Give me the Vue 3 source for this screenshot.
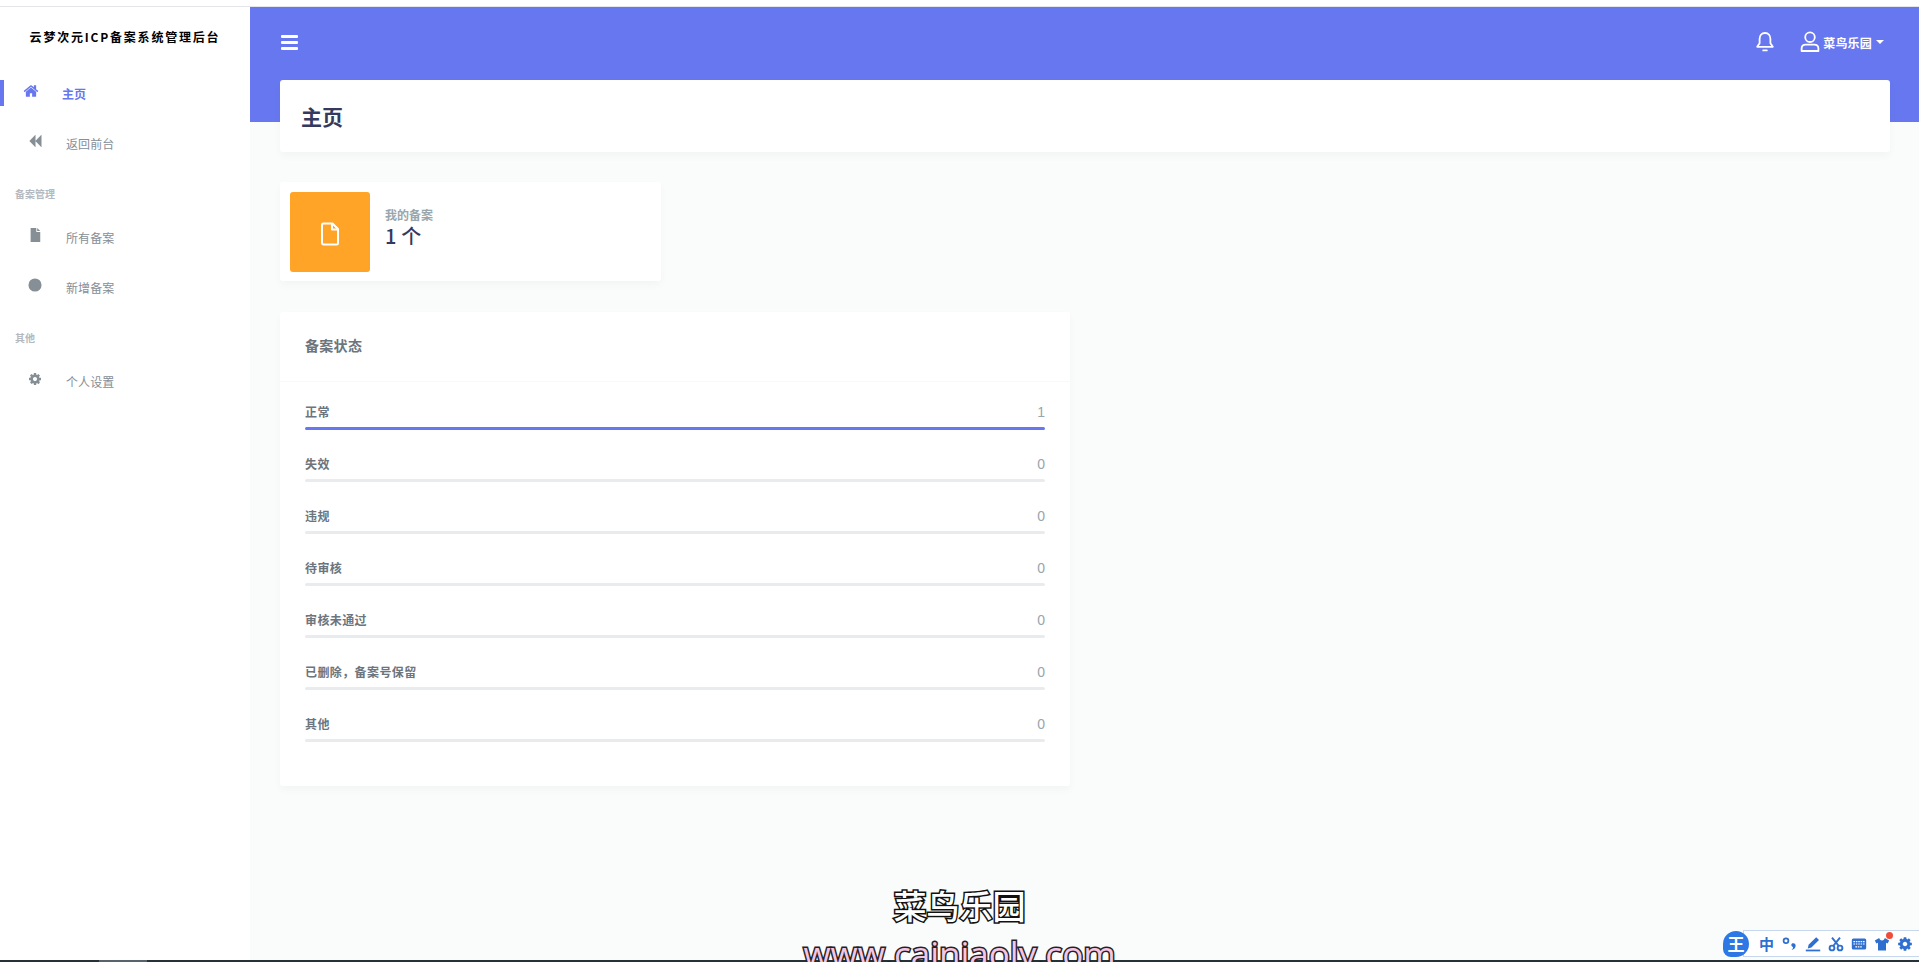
<script setup>
const nav1 = [{ t: '所有备案', i: 'file' }, { t: '新增备案', i: 'circle' }]
const rows = [
  { l: '正常', v: 1, w: 100 },
  { l: '失效', v: 0, w: 0 },
  { l: '违规', v: 0, w: 0 },
  { l: '待审核', v: 0, w: 0 },
  { l: '审核未通过', v: 0, w: 0 },
  { l: '已删除，备案号保留', v: 0, w: 0 },
  { l: '其他', v: 0, w: 0 }
]
</script>

<template>
  <div class="page">
    <div class="topstrip"></div>
    <div class="body">
      <aside class="side">
        <div class="brand">云梦次元ICP备案系统管理后台</div>
        <div class="item active">
          <svg class="ico home" viewBox="0 0 1792 1792"><path fill="currentColor" d="M1472 992v480q0 26-19 45t-45 19h-384v-384h-256v384h-384q-26 0-45-19t-19-45v-480q0-1 .5-3t.5-3l575-474 575 474q1 2 1 6zm223-69l-62 74q-8 9-21 11h-3q-13 0-21-7l-692-577-692 577q-12 8-24 7-13-2-21-11l-62-74q-8-10-7-23.500t11-21.500l719-599q32-26 76-26t76 26l244 204v-195q0-14 9-23t23-9h192q14 0 23 9t9 23v408l219 182q10 8 11 21.500t-7 23.500z"/></svg>
          <span>主页</span>
        </div>
        <div class="item">
          <svg class="ico" viewBox="0 0 1792 1792"><path fill="currentColor" d="M1683 141q19-19 32-13t13 32v1472q0 26-13 32t-32-13l-710-710q-9-9-13-19v710q0 26-13 32t-32-13l-710-710q-19-19-19-45t19-45l710-710q19-19 32-13t13 32v710q4-10 13-19z"/></svg>
          <span>返回前台</span>
        </div>
        <div class="sect">备案管理</div>
        <div class="item" v-for="n in nav1" :key="n.t">
          <svg v-if="n.i === 'file'" class="ico" viewBox="0 0 16 16"><path fill="currentColor" d="M3 0h6.500v4.500H14V16H3zM10.500 0 14 3.500h-3.500z"/></svg>
          <svg v-else class="ico" viewBox="0 0 16 16"><circle cx="8" cy="8" r="7.500" fill="currentColor"/></svg>
          <span>{{ n.t }}</span>
        </div>
        <div class="sect">其他</div>
        <div class="item">
          <svg class="ico" viewBox="0 0 1792 1792"><path fill="currentColor" d="M1152 896q0-106-75-181t-181-75-181 75-75 181 75 181 181 75 181-75 75-181zm512-109v222q0 12-8 23t-20 13l-185 28q-19 54-39 91 35 50 107 138 10 12 10 25t-9 23q-27 37-99 108t-94 71q-12 0-26-9l-138-108q-44 23-91 38-16 136-29 186-7 28-36 28h-222q-14 0-24.500-8.500t-11.500-21.500l-28-184q-49-16-90-37l-141 107q-10 9-25 9-14 0-25-11-126-114-165-168-7-10-7-23 0-12 8-23 15-21 51-66.500t54-70.500q-27-50-41-99l-183-27q-13-2-21-12.500t-8-23.500v-222q0-12 8-23t19-13l186-28q14-46 39-92-40-57-107-138-10-12-10-24 0-10 9-23 26-36 98.500-107.500t94.500-71.500q13 0 26 10l138 107q44-23 91-38 16-136 29-186 7-28 36-28h222q14 0 24.500 8.500t11.500 21.500l28 184q49 16 90 37l142-107q9-9 24-9 13 0 25 10 129 119 165 170 7 8 7 22 0 12-8 23-15 21-51 66.500t-54 70.500q26 50 41 98l183 28q13 2 21 12.500t8 23.500z"/></svg>
          <span>个人设置</span>
        </div>
      </aside>

      <main class="main">
        <div class="band"></div>
        <header class="nav">
          <div class="burger"><i></i><i></i><i></i></div>
          <div class="navright">
            <svg class="bell" viewBox="0 0 20 20" fill="none" stroke="#fff" stroke-width="1.500" stroke-linejoin="round" stroke-linecap="round"><path d="M10 2.500c-3 0-4.500 2.300-4.500 5v3.500L3.500 14h13l-2-3V7.500c0-2.700-1.500-5-4.500-5z"/><path d="M8.500 17h3"/></svg>
            <svg class="user" viewBox="0 0 20 20" fill="none" stroke="#fff" stroke-width="1.500" stroke-linejoin="round"><circle cx="10" cy="6" r="4"/><path d="M3 17.500v-2c0-2 1.500-3.300 3.500-3.300h7c2 0 3.500 1.300 3.500 3.300v2z"/></svg>
            <span class="uname">菜鸟乐园</span>
            <i class="caret"></i>
          </div>
        </header>
        <div class="content">
          <div class="titlecard"><h1>主页</h1></div>
          <div class="stat">
            <div class="statbox">
              <svg viewBox="0 0 20 24" fill="none" stroke="#fff" stroke-width="2" stroke-linejoin="round"><path d="M3 1.500h9.500L18 7v14c0 .8-.7 1.500-1.500 1.500h-13c-.8 0-1.500-.7-1.500-1.500V3c0-.8.700-1.500 1.500-1.500z"/><path d="M12 2v5.500h5.500"/></svg>
            </div>
            <div class="stattext">
              <div class="statlabel">我的备案</div>
              <div class="statval">1 个</div>
            </div>
          </div>
          <section class="status">
            <div class="statushead">备案状态</div>
            <div class="statusbody">
              <div class="row" v-for="r in rows" :key="r.l">
                <div class="rowtop"><b>{{ r.l }}</b><span>{{ r.v }}</span></div>
                <div class="track"><div class="fill" :style="{ width: r.w + '%' }"></div></div>
              </div>
            </div>
          </section>
        </div>
      </main>
    </div>
    <div class="bottom"><i></i></div>

    <div class="wm">
      <div class="wm1">菜鸟乐园</div>
      <div class="wm2">www.cainiaoly.com</div>
    </div>

    <div class="ime">
      <div class="imelogo">王</div>
      <div class="imebar">
        <span class="imezh">中</span>
        <svg viewBox="0 0 20 20" fill="#2e6fd0"><circle cx="5" cy="6" r="3" fill="none" stroke="#2e6fd0" stroke-width="2.200"/><path d="M12.500 9.500c2.500-1 5 .3 4.500 3.300-.5 2.700-2.500 4.200-5 4.700 1.300-1.400 1.900-2.500 1.800-3.700-2-.1-2.900-3.200-1.300-4.300z"/></svg>
        <svg viewBox="0 0 20 20" fill="#2e6fd0"><path d="M14 1.500l3.500 3.500-9.500 9.500-4.500 1 1-4.500z"/><rect x="1" y="17" width="18" height="2.200"/></svg>
        <svg viewBox="0 0 20 20" fill="none" stroke="#2e6fd0" stroke-width="2.400"><circle cx="5" cy="15" r="3"/><circle cx="15" cy="15" r="3"/><path d="M6.500 12.500 15 2M13.500 12.500 5 2"/></svg>
        <svg viewBox="0 0 20 20"><rect x="1" y="3" width="18" height="14" rx="2" fill="#2e6fd0"/><path d="M3 7h14M3 10h14M5.500 13.500h9" stroke="#fff" stroke-width="1.500" stroke-dasharray="2 1"/></svg>
        <span class="shirt">
          <svg viewBox="0 0 20 20" fill="#2e6fd0"><path d="M6.500 2.500 1 5.500l2 4 2-1V18h10V8.500l2 1 2-4-5.500-3c-.5 2-1.500 3-3.500 3s-3-1-3.500-3z"/></svg>
          <i></i>
        </span>
        <svg viewBox="0 0 1792 1792"><path fill="#2e6fd0" d="M1152 896q0-106-75-181t-181-75-181 75-75 181 75 181 181 75 181-75 75-181zm512-109v222q0 12-8 23t-20 13l-185 28q-19 54-39 91 35 50 107 138 10 12 10 25t-9 23q-27 37-99 108t-94 71q-12 0-26-9l-138-108q-44 23-91 38-16 136-29 186-7 28-36 28h-222q-14 0-24.500-8.500t-11.500-21.500l-28-184q-49-16-90-37l-141 107q-10 9-25 9-14 0-25-11-126-114-165-168-7-10-7-23 0-12 8-23 15-21 51-66.500t54-70.500q-27-50-41-99l-183-27q-13-2-21-12.500t-8-23.500v-222q0-12 8-23t19-13l186-28q14-46 39-92-40-57-107-138-10-12-10-24 0-10 9-23 26-36 98.500-107.500t94.500-71.500q13 0 26 10l138 107q44-23 91-38 16-136 29-186 7-28 36-28h222q14 0 24.500 8.500t11.500 21.500l28 184q49 16 90 37l142-107q9-9 24-9 13 0 25 10 129 119 165 170 7 8 7 22 0 12-8 23-15 21-51 66.500t-54 70.500q26 50 41 98l183 28q13 2 21 12.500t8 23.500z"/></svg>
      </div>
    </div>
  </div>
</template>

<style>
html, body { margin: 0; height: 100%; overflow: hidden; background: #fff; }
</style>

<style scoped>
* { box-sizing: border-box; }
.page {
  position: relative;
  height: 962px;
  display: flex;
  flex-direction: column;
  overflow: hidden;
  font-family: "Noto Sans CJK SC", "Noto Sans", sans-serif;
  color: #6c757d;
}
.topstrip { height: 7px; flex: none; background: #fff; border-bottom: 1px solid #e3e5ea; }
.body { flex: 1; display: flex; min-height: 0; }
.bottom { height: 2px; flex: none; background: #263238; padding-left: 99px; }
.bottom i { display: block; width: 48px; height: 2px; background: #57646c; }

.side { width: 250px; flex: none; background: #fff; }
.brand {
  height: 61px;
  padding-top: 20px;
  text-align: center;
  font-size: 12px;
  line-height: 19px;
  font-weight: 700;
  letter-spacing: 1.800px;
  color: #000;
  white-space: nowrap;
}
.item {
  position: relative;
  height: 50px;
  display: flex;
  align-items: center;
  padding-left: 28px;
  font-size: 12px;
  letter-spacing: .1px;
  color: #868e96;
}
.item span { margin-left: 24px; }
.item .ico { width: 14px; height: 14px; color: #868e96; position: relative; top: -2px; }
.item.active { color: #6777ef; font-weight: 600; }
.item.active .ico { color: #6777ef; width: 16px; height: 16px; margin-left: -5px; }
.item.active span { margin-left: 23px; }
.item.active::before {
  content: "";
  position: absolute;
  left: 0;
  top: 12px;
  width: 4px;
  height: 26px;
  background: #6777ef;
}
.sect {
  height: 24px;
  padding: 0 0 0 15px;
  margin: 14px 0 6px;
  font-size: 10px;
  line-height: 24px;
  font-weight: 700;
  color: #b4b9bf;
}

.main { position: relative; flex: 1; min-width: 0; background: #fafcfb; }
.band { position: absolute; left: 0; right: 0; top: 0; height: 115px; background: #6777ef; }
.nav {
  position: relative;
  height: 73px;
  display: flex;
  align-items: center;
  justify-content: space-between;
  padding: 0 35px 3px 31px;
}
.burger { display: flex; flex-direction: column; gap: 3px; width: 17px; }
.burger i { display: block; height: 3px; border-radius: 1px; background: #fff; }
.navright { display: flex; align-items: center; }
.bell { width: 24px; height: 24px; margin-right: 21px; }
.user { width: 24px; height: 24px; margin-right: 1px; }
.uname { font-size: 12px; font-weight: 700; color: #fff; line-height: 18px; letter-spacing: .2px; position: relative; top: 1px; }
.caret { width: 0; height: 0; margin-left: 4px; border: 4px solid transparent; border-top-color: #fff; border-bottom: 0; }

.content { position: relative; padding: 0 29px 0 30px; }
.titlecard {
  height: 72px;
  display: flex;
  align-items: center;
  padding-left: 21px;
  background: #fff;
  border-radius: 3px;
  box-shadow: 0 4px 8px rgba(0, 0, 0, .03);
}
h1 { margin: 0; font-size: 21px; font-weight: 700; line-height: 28px; color: #34395e; }
.stat {
  width: 381px;
  height: 99px;
  margin-top: 30px;
  padding: 10px;
  display: flex;
  background: #fff;
  border-radius: 3px;
  box-shadow: 0 4px 8px rgba(0, 0, 0, .03);
}
.statbox {
  width: 80px;
  height: 80px;
  flex: none;
  display: flex;
  align-items: center;
  justify-content: center;
  padding-top: 3px;
  background: #ffa426;
  border-radius: 3px;
}
.statbox svg { width: 20px; height: 24px; }
.stattext { margin-left: 15px; padding-top: 14px; }
.statlabel { font-size: 12px; line-height: 17px; font-weight: 700; color: #98a6ad; }
.statval { font-size: 20px; line-height: 26px; font-weight: 500; color: #34395e; letter-spacing: .2px; }

.status {
  width: 790px;
  height: 474px;
  margin-top: 31px;
  background: #fff;
  border-radius: 3px;
  box-shadow: 0 4px 8px rgba(0, 0, 0, .03);
}
.statushead {
  height: 70px;
  padding: 22px 25px 0;
  font-size: 14px;
  line-height: 22px;
  font-weight: 700;
  letter-spacing: .3px;
  color: #6c757d;
  border-bottom: 1px solid #f9f9f9;
}
.statusbody { padding: 16px 25px 0; }
.row { height: 52px; }
.rowtop { height: 28px; display: flex; justify-content: space-between; align-items: center; padding-bottom: 1px; }
.rowtop b { font-size: 12px; line-height: 18px; font-weight: 700; letter-spacing: .4px; color: #6c757d; }
.rowtop span { font-size: 14px; line-height: 18px; color: #98a6ad; font-family: "Liberation Sans", sans-serif; }
.track { height: 3px; margin-top: 1px; background: #e9ecef; border-radius: 3px; overflow: hidden; }
.fill { height: 100%; background: #6777ef; }

.wm { position: absolute; left: 0; right: 0; top: 881px; text-align: center; pointer-events: none; }
.wm1 {
  font-size: 33px;
  line-height: 48px;
  font-weight: 500;
  color: #fff;
  -webkit-text-stroke: 3px #111;
  paint-order: stroke fill;
}
.wm2 {
  margin-top: 3px;
  font-family: "Open Sans", sans-serif;
  font-size: 35px;
  line-height: 44px;
  color: #f5c6e4;
  -webkit-text-stroke: 3px #222;
  paint-order: stroke fill;
}

.ime { position: absolute; left: 1723px; top: 929px; right: 0; height: 29px; display: flex; align-items: center; }
.imelogo {
  position: relative;
  z-index: 1;
  width: 26px;
  height: 26px;
  flex: none;
  border-radius: 50% 50% 50% 8px;
  background: #2e78e6;
  color: #fff;
  font-size: 17px;
  font-weight: 700;
  line-height: 26px;
  text-align: center;
}
.imebar {
  flex: 1;
  height: 27px;
  margin-left: -6px;
  padding-left: 15px;
  display: flex;
  align-items: center;
  gap: 7px;
  background: #fff;
  border: 1px solid #c7d7ee;
  border-right: 0;
}
.imebar svg { width: 16px; height: 16px; flex: none; }
.imezh { width: 16px; font-size: 15px; font-weight: 700; line-height: 20px; color: #2e6fd0; }
.shirt { position: relative; width: 16px; height: 16px; flex: none; }
.shirt svg { display: block; }
.shirt i { position: absolute; right: -3px; top: -4px; width: 7px; height: 7px; border-radius: 50%; background: #ee4d3a; }
</style>
